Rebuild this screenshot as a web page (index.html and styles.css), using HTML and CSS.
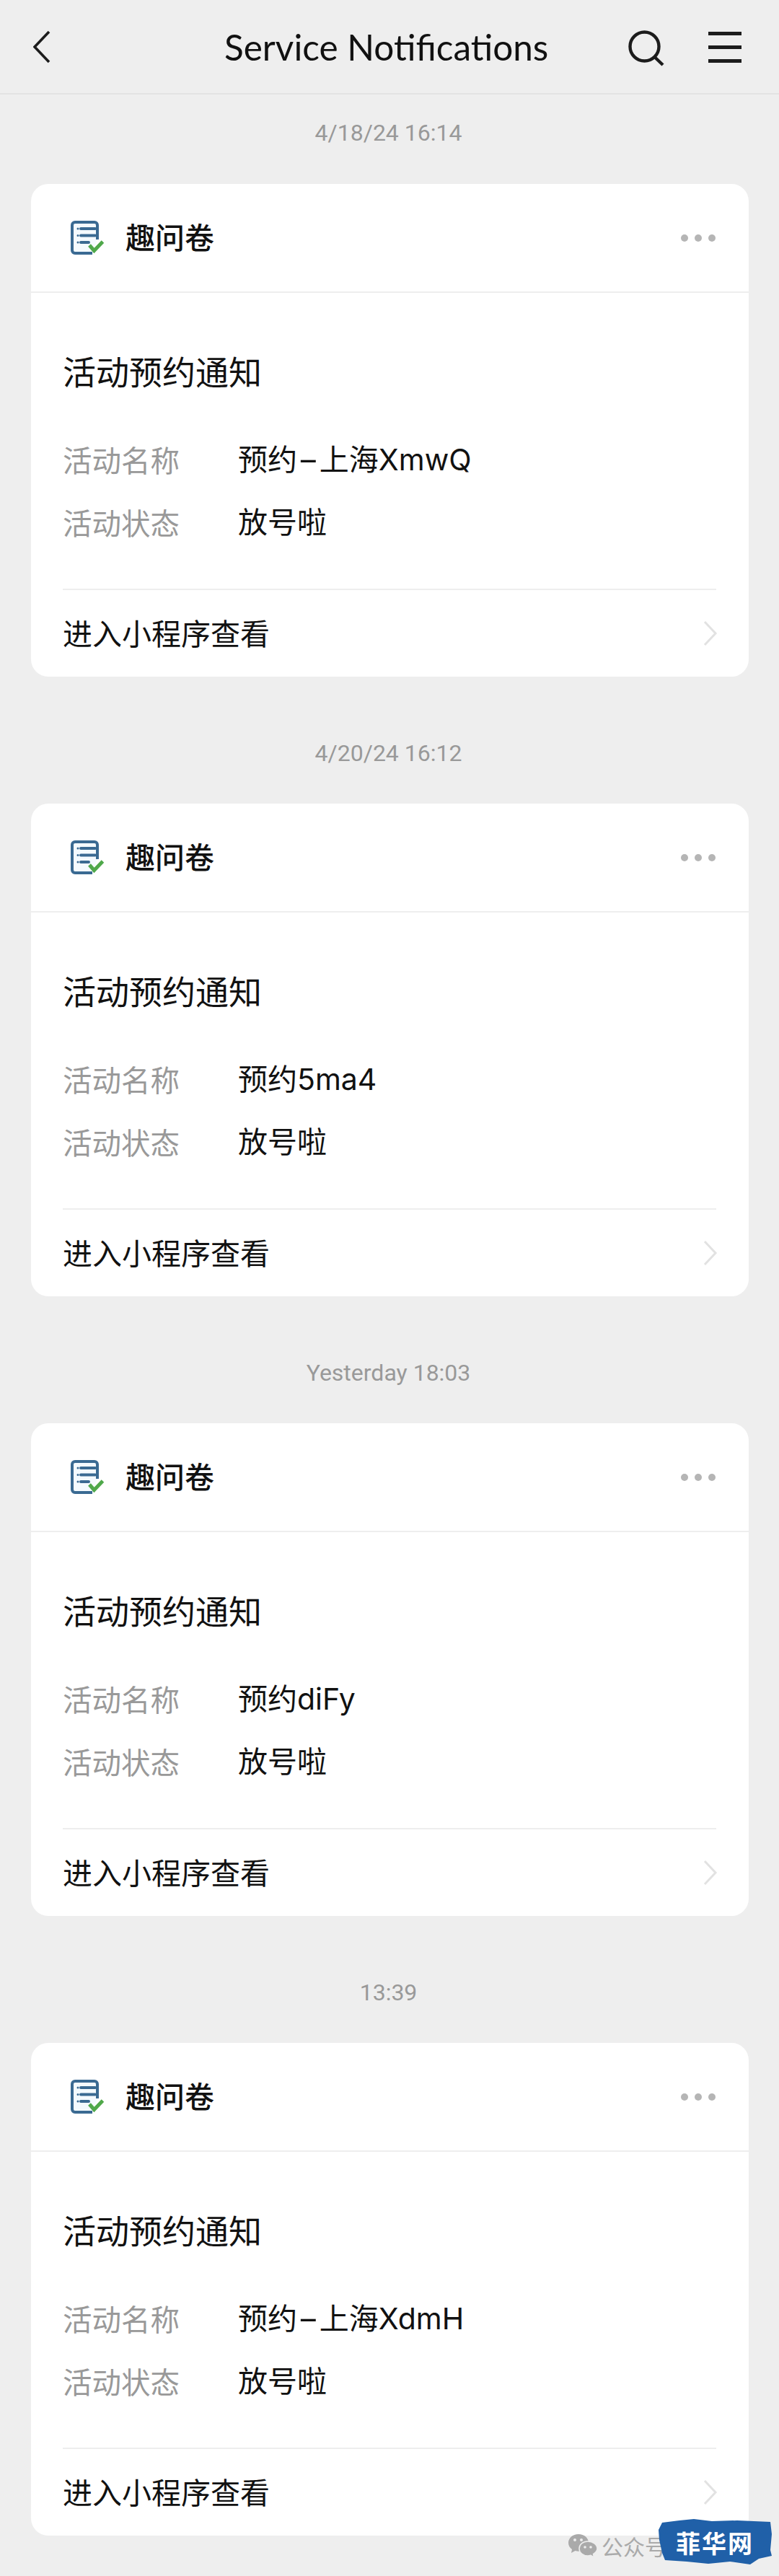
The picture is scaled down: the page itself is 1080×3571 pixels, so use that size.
FILE: index.html
```html
<!DOCTYPE html>
<html lang="zh-CN">
	<head>
		<meta charset="utf-8">
		<title>Service Notifications</title>
		<link rel="stylesheet" href="styles.css">
	</head>
	<body>
		<div class="header">
			<svg class="back" width="24" height="46" viewBox="0 0 24 46"><path d="M22 2 L2 23 L22 44" fill="none" stroke="#1c1c1c" stroke-width="3.6"/></svg>
			<h1>Service Notifications</h1>
			<svg class="search" width="50" height="50" viewBox="0 0 50 50"><circle cx="22.5" cy="22.5" r="20" fill="none" stroke="#1c1c1c" stroke-width="4.4"/><path d="M36.5 37 L48 48" fill="none" stroke="#1c1c1c" stroke-width="4.4"/></svg>
			<div class="menu"><i></i><i></i><i></i></div>
		</div>

		<div class="list">
			<div class="item">
				<div class="time">4/18/24 16:14</div>
				<div class="card">
					<div class="card-head">
						<svg class="logo" width="46" height="48" viewBox="0 0 46 48"><path d="M30 45 H6 a4 4 0 0 1 -4 -4 V6 a4 4 0 0 1 4 -4 H33 a4 4 0 0 1 4 4 V26" fill="#f4fafe" stroke="#3a6a92" stroke-width="4"/><path d="M14 11 H34 M14 20.5 H34 M14 30 H25" stroke="#3a6a92" stroke-width="4" stroke-linecap="round"/><path d="M10 11 V11.1 M10 20.5 V20.6 M10 30 V30.1" stroke="#3a6a92" stroke-width="3" stroke-linecap="round"/><path d="M26 34 L32.5 41.5 L44.5 29" fill="none" stroke="#4fa84a" stroke-width="5"/></svg>
						<span class="app-name">趣问卷</span>
						<div class="dots"><i></i><i></i><i></i></div>
					</div>
					<div class="card-body">
						<h2>活动预约通知</h2>
						<div class="row"><span class="key">活动名称</span><span class="val">预约<span class="dash">-</span>上海XmwQ</span></div>
						<div class="row"><span class="key">活动状态</span><span class="val">放号啦</span></div>
					</div>
					<div class="card-foot">
						<span>进入小程序查看</span>
						<svg width="20" height="36" viewBox="0 0 20 36"><path d="M2 2 L17 18 L2 34" fill="none" stroke="#e2e2e2" stroke-width="3"/></svg>
					</div>
				</div>
			</div>

			<div class="item">
				<div class="time">4/20/24 16:12</div>
				<div class="card">
					<div class="card-head">
						<svg class="logo" width="46" height="48" viewBox="0 0 46 48"><path d="M30 45 H6 a4 4 0 0 1 -4 -4 V6 a4 4 0 0 1 4 -4 H33 a4 4 0 0 1 4 4 V26" fill="#f4fafe" stroke="#3a6a92" stroke-width="4"/><path d="M14 11 H34 M14 20.5 H34 M14 30 H25" stroke="#3a6a92" stroke-width="4" stroke-linecap="round"/><path d="M10 11 V11.1 M10 20.5 V20.6 M10 30 V30.1" stroke="#3a6a92" stroke-width="3" stroke-linecap="round"/><path d="M26 34 L32.5 41.5 L44.5 29" fill="none" stroke="#4fa84a" stroke-width="5"/></svg>
						<span class="app-name">趣问卷</span>
						<div class="dots"><i></i><i></i><i></i></div>
					</div>
					<div class="card-body">
						<h2>活动预约通知</h2>
						<div class="row"><span class="key">活动名称</span><span class="val">预约5ma4</span></div>
						<div class="row"><span class="key">活动状态</span><span class="val">放号啦</span></div>
					</div>
					<div class="card-foot">
						<span>进入小程序查看</span>
						<svg width="20" height="36" viewBox="0 0 20 36"><path d="M2 2 L17 18 L2 34" fill="none" stroke="#e2e2e2" stroke-width="3"/></svg>
					</div>
				</div>
			</div>

			<div class="item">
				<div class="time">Yesterday 18:03</div>
				<div class="card">
					<div class="card-head">
						<svg class="logo" width="46" height="48" viewBox="0 0 46 48"><path d="M30 45 H6 a4 4 0 0 1 -4 -4 V6 a4 4 0 0 1 4 -4 H33 a4 4 0 0 1 4 4 V26" fill="#f4fafe" stroke="#3a6a92" stroke-width="4"/><path d="M14 11 H34 M14 20.5 H34 M14 30 H25" stroke="#3a6a92" stroke-width="4" stroke-linecap="round"/><path d="M10 11 V11.1 M10 20.5 V20.6 M10 30 V30.1" stroke="#3a6a92" stroke-width="3" stroke-linecap="round"/><path d="M26 34 L32.5 41.5 L44.5 29" fill="none" stroke="#4fa84a" stroke-width="5"/></svg>
						<span class="app-name">趣问卷</span>
						<div class="dots"><i></i><i></i><i></i></div>
					</div>
					<div class="card-body">
						<h2>活动预约通知</h2>
						<div class="row"><span class="key">活动名称</span><span class="val">预约diFy</span></div>
						<div class="row"><span class="key">活动状态</span><span class="val">放号啦</span></div>
					</div>
					<div class="card-foot">
						<span>进入小程序查看</span>
						<svg width="20" height="36" viewBox="0 0 20 36"><path d="M2 2 L17 18 L2 34" fill="none" stroke="#e2e2e2" stroke-width="3"/></svg>
					</div>
				</div>
			</div>

			<div class="item">
				<div class="time">13:39</div>
				<div class="card">
					<div class="card-head">
						<svg class="logo" width="46" height="48" viewBox="0 0 46 48"><path d="M30 45 H6 a4 4 0 0 1 -4 -4 V6 a4 4 0 0 1 4 -4 H33 a4 4 0 0 1 4 4 V26" fill="#f4fafe" stroke="#3a6a92" stroke-width="4"/><path d="M14 11 H34 M14 20.5 H34 M14 30 H25" stroke="#3a6a92" stroke-width="4" stroke-linecap="round"/><path d="M10 11 V11.1 M10 20.5 V20.6 M10 30 V30.1" stroke="#3a6a92" stroke-width="3" stroke-linecap="round"/><path d="M26 34 L32.5 41.5 L44.5 29" fill="none" stroke="#4fa84a" stroke-width="5"/></svg>
						<span class="app-name">趣问卷</span>
						<div class="dots"><i></i><i></i><i></i></div>
					</div>
					<div class="card-body">
						<h2>活动预约通知</h2>
						<div class="row"><span class="key">活动名称</span><span class="val">预约<span class="dash">-</span>上海XdmH</span></div>
						<div class="row"><span class="key">活动状态</span><span class="val">放号啦</span></div>
					</div>
					<div class="card-foot">
						<span>进入小程序查看</span>
						<svg width="20" height="36" viewBox="0 0 20 36"><path d="M2 2 L17 18 L2 34" fill="none" stroke="#e2e2e2" stroke-width="3"/></svg>
					</div>
				</div>
			</div>
		</div>

		<div class="mp-mark">
			<svg width="42" height="34" viewBox="0 0 42 34"><path d="M15 1 C7 1 1 6.500 1 13 C1 17 3 20 6 22 L5 27 L10.500 24 C12 24.500 13.500 24.700 15 24.700 C22 24.700 29 19 29 13 C29 6.500 23 1 15 1 Z" fill="#aaa"/><path d="M28 11 C21 11 16 15.500 16 21 C16 26.500 21 31 28 31 C29.500 31 30.500 30.800 32 30.300 L36.500 33 L35.500 28.500 C38.500 26.500 41 24 41 21 C41 15.500 35 11 28 11 Z" fill="#aaa" stroke="#eee" stroke-width="1.500"/><circle cx="10" cy="9" r="2" fill="#eee"/><circle cx="19" cy="9" r="2" fill="#eee"/><circle cx="24" cy="19" r="1.800" fill="#eee"/><circle cx="32" cy="19" r="1.800" fill="#eee"/></svg>
			<span>公众号</span>
		</div>
		<div class="brand">
			<svg width="160" height="68" viewBox="0 0 160 68"><path d="M6 6 L30 3 L50 1 L75 4 L110 3 L156 5 L158 22 L156 44 L158 52 L140 56 L128 64 L100 60 L70 63 L40 60 L10 58 L6 48 L2 30 L1 16 Z" fill="#2060a8"/></svg>
			<span>菲华网</span>
		</div>
	</body>
</html>
```

FILE: styles.css
```css
* {
	box-sizing: border-box;
}
body {
	margin: 0;
	position: relative;
	background-color: #eeeeee;
	font-family: "Noto Sans CJK SC", sans-serif;
	color: #111;
}
i {
	display: block;
}
.header {
	display: flex;
	align-items: center;
	height: 131px;
	padding-left: 46px;
	border-bottom: 2px solid #e3e3e3;
}
.header h1 {
	margin: 0 0 0 241px;
	font-family: "Lato", sans-serif;
	font-size: 49.500px;
	font-weight: 400;
	line-height: 70px;
	white-space: nowrap;
}
.back {
	flex: none;
}
.search {
	flex: none;
	margin-left: auto;
	margin-top: 4px;
}
.menu {
	display: flex;
	flex-direction: column;
	gap: 14px;
	width: 46px;
	margin: 1px 52px 0 61px;
}
.menu i {
	height: 5px;
	background-color: #1c1c1c;
}
.list {
	padding: 0 42px 57px 43px;
}
.item {
	margin-bottom: 52px;
}
.item:first-child .time {
	padding-top: 33px;
	padding-bottom: 50px;
}
.item:last-child {
	margin-bottom: 0;
}
.time {
	padding-top: 34px;
	padding-bottom: 50px;
	padding-right: 4px;
	height: 124px;
	font-family: "Roboto", sans-serif;
	font-size: 32px;
	line-height: 40px;
	color: #999;
	text-align: center;
}
.card {
	height: 683px;
	border-radius: 24px;
	background-color: #fff;
}
.card-head {
	display: flex;
	align-items: center;
	height: 151px;
	padding: 0 46px 0 55px;
	border-bottom: 2px solid #eee;
}
.logo {
	flex: none;
}
.app-name {
	margin-left: 30px;
	margin-bottom: 6px;
	font-size: 41px;
	font-weight: 500;
	line-height: 56px;
}
.dots {
	display: flex;
	gap: 9px;
	margin-left: auto;
}
.dots i {
	width: 10px;
	height: 10px;
	border-radius: 50%;
	background-color: #b5b5b5;
}
.card-body {
	height: 412px;
	margin: 0 45px 0 44px;
	padding-top: 77px;
	border-bottom: 2px solid #eee;
}
.card-body h2 {
	margin: 0 0 66px 0;
	font-size: 46px;
	font-weight: 400;
	line-height: 60px;
}
.row {
	display: flex;
	margin-bottom: 31px;
	font-size: 40.500px;
	line-height: 56px;
}
.key {
	width: 243px;
	color: #999;
}
.val {
	font-family: "Inter", "Noto Sans CJK SC", sans-serif;
	font-size: 41px;
	color: #111;
}
.dash {
	display: inline-block;
	margin: 0 6px;
	transform: scaleX(1.6);
}
.card-foot {
	display: flex;
	align-items: center;
	justify-content: space-between;
	height: 120px;
	padding: 0 43px 0 44px;
	font-size: 41px;
}
.card-foot span {
	margin-bottom: 4px;
}
.mp-mark {
	position: absolute;
	left: 787px;
	top: 3512px;
	display: flex;
	align-items: center;
	gap: 5px;
	font-size: 30px;
	line-height: 34px;
	color: #aaa;
}
.brand {
	position: absolute;
	left: 912px;
	top: 3491px;
	width: 160px;
	height: 68px;
}
.brand svg {
	display: block;
}
.brand span {
	position: absolute;
	left: 25px;
	top: 12px;
	font-size: 34px;
	font-weight: 700;
	line-height: 44px;
	letter-spacing: 2px;
	color: #fff;
	white-space: nowrap;
}
```
